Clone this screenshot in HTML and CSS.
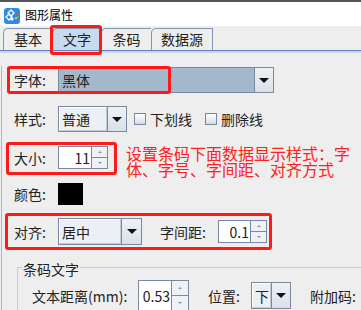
FILE: index.html
```html
<!DOCTYPE html>
<html lang="zh">
<head>
  <meta charset="utf-8">
  <title>图形属性</title>
  <link rel="stylesheet" href="styles.css">
</head>
<body>
  <div class="window">
    <div class="titlebar">
      <svg class="app-icon" width="16" height="16" viewBox="0 0 16 16">
        <rect x="0" y="0" width="16" height="16" rx="3" fill="#2f8ae6"/>
        <path d="M7 2 L10 5 L7 8 L4 5 Z" fill="none" stroke="#fff" stroke-width="1.3"/>
        <path d="M5 6 L8 9 L5 12 L2 9 Z" fill="none" stroke="#fff" stroke-width="1.3"/>
        <path d="M8 9 L10 11 L8 13 L6 11 Z" fill="#fff"/>
        <rect x="11" y="6" width="2" height="2" fill="#f04a3a"/>
        <rect x="11" y="9" width="2" height="2" fill="#f5c330"/>
        <rect x="13" y="8" width="2" height="2" fill="#3fc05a"/>
      </svg>
      <span class="title">图形属性</span>
    </div>

    <div class="tabs">
      <div class="tab tab-basic">基本</div>
      <div class="tab tab-text active">文字</div>
      <div class="tab tab-code">条码</div>
      <div class="tab tab-data">数据源</div>
    </div>
    <div class="tab-line"></div>

    <div class="panel">
      <div class="row row-font">
        <span class="label">字体:</span>
        <div class="combo combo-font">
          <span class="combo-field">黑体</span>
          <span class="combo-btn"><i class="arrow"></i></span>
        </div>
      </div>

      <div class="row row-style">
        <span class="label">样式:</span>
        <div class="combo combo-style">
          <span class="combo-field">普通</span>
          <span class="combo-btn"><i class="arrow"></i></span>
        </div>
        <span class="check check-under"><i class="box"></i>下划线</span>
        <span class="check check-strike"><i class="box"></i>删除线</span>
      </div>

      <div class="row row-size">
        <span class="label">大小:</span>
        <div class="spinner spin-size">
          <span class="spin-field">11</span>
          <span class="spin-btns"><i class="up"></i><i class="down"></i></span>
        </div>
        <div class="note">
          <span class="note-line">设置条码下面数据显示样式：字</span>
          <span class="note-line">体、字号、字间距、对齐方式</span>
        </div>
      </div>

      <div class="row row-color">
        <span class="label">颜色:</span>
        <span class="swatch"></span>
      </div>

      <div class="row row-align">
        <span class="label">对齐:</span>
        <div class="combo combo-align">
          <span class="combo-field">居中</span>
          <span class="combo-btn"><i class="arrow"></i></span>
        </div>
        <span class="label-spacing">字间距:</span>
        <div class="spinner spin-spacing">
          <span class="spin-field">0.1</span>
          <span class="spin-btns"><i class="up"></i><i class="down"></i></span>
        </div>
      </div>

      <fieldset class="group">
        <legend>条码文字</legend>
        <div class="row row-distance">
          <span class="label-distance">文本距离(mm):</span>
          <div class="spinner spin-distance">
            <span class="spin-field">0.53</span>
            <span class="spin-btns"><i class="up"></i><i class="down"></i></span>
          </div>
          <span class="label-pos">位置:</span>
          <div class="combo combo-pos">
            <span class="combo-field">下</span>
            <span class="combo-btn"><i class="arrow"></i></span>
          </div>
          <span class="label-extra">附加码:</span>
        </div>
      </fieldset>
    </div>

    <!-- red annotation frames -->
    <div class="mark mark-tab"></div>
    <div class="mark mark-font"></div>
    <div class="mark mark-size"></div>
    <div class="mark mark-align"></div>
  </div>
</body>
</html>
```

FILE: styles.css
```css
html, body {
  margin: 0;
  padding: 0;
}
body {
  background-color: #eeeeee;
  font-family: "Noto Sans CJK SC", "DejaVu Sans", sans-serif;
  font-size: 14px;
  color: #222;
}
.window {
  position: relative;
  width: 361px;
  height: 310px;
  overflow: hidden;
}

/* title bar */
.titlebar {
  height: 24px;
  border-top: 2px solid #555;
  background: #fff;
  display: flex;
  align-items: center;
}
.app-icon {
  margin-left: 4px;
  margin-top: 4px;
}
.title {
  margin-left: 5px;
  font-size: 12px;
  color: #000;
  line-height: 12px;
  margin-top: 2px;
}

/* tabs */
.tabs {
  display: flex;
  height: 22px;
  margin-top: 2px;
  padding-left: 3px;
}
.tab {
  box-sizing: border-box;
  height: 22px;
  border-left: 1px solid #8394ad;
  border-top: 1px solid #8394ad;
  border-top-left-radius: 5px;
  text-align: center;
  line-height: 20px;
  color: #222;
}
.tab-basic { width: 49px; }
.tab-text { width: 49px; }
.tab-code { width: 50px; }
.tab-data {
  width: 62px;
  border-right: 1px solid #8394ad;
}
.tab.active {
  background: #c8daef;
}
.tab-line {
  height: 2px;
  border-top: 1px solid #6482bd;
  background: #c6d7ee;
}

/* panel */
.panel {
  height: 260px;
  margin-left: 1px;
  border-left: 1px solid #a8b8d0;
  padding-left: 12px;
}
.row {
  display: flex;
  align-items: center;
}
.label {
  width: 44px;
  line-height: 16px;
}
.row-font { margin-top: 13px; height: 28px; }
.row-style { margin-top: 11px; height: 28px; }
.row-size { margin-top: 13px; height: 23px; }
.row-color { margin-top: 14px; height: 22px; }
.row-align { margin-top: 13px; height: 27px; }

/* combo boxes */
.combo {
  box-sizing: border-box;
  display: flex;
  border: 1px solid #7a8a9c;
  background: #eceff3;
}
.combo-field {
  flex: 1;
  box-sizing: border-box;
  border: 1px solid #fff;
  border-right-color: #c3ccd6;
  border-bottom-color: #c3ccd6;
  padding-left: 2px;
  display: flex;
  align-items: center;
  line-height: 16px;
}
.combo-btn {
  width: 19px;
  box-sizing: border-box;
  border-left: 1px solid #7a8a9c;
  background: linear-gradient(#eef2f6, #d8e0e9);
  display: flex;
  align-items: center;
  justify-content: center;
}
.arrow {
  width: 0;
  height: 0;
  border-left: 5px solid transparent;
  border-right: 5px solid transparent;
  border-top: 5px solid #111;
}
.combo-font {
  width: 216px;
  height: 26px;
}
.combo-font .combo-field {
  background: #a3b8cc;
  border-color: #a3b8cc;
}
.combo-style {
  width: 69px;
  height: 26px;
}
.combo-align {
  width: 84px;
  height: 27px;
}
.combo-align .combo-btn { width: 20px; }
.combo-pos {
  width: 40px;
  height: 27px;
}

/* checkboxes */
.check {
  display: flex;
  align-items: center;
  line-height: 16px;
}
.check .box {
  box-sizing: border-box;
  width: 12px;
  height: 12px;
  border: 1px solid #7a8a9c;
  background: linear-gradient(#ffffff, #d4dce6);
  margin-right: 4px;
}
.check-under { margin-left: 7px; }
.check-strike { margin-left: 13px; }

/* spinners */
.spinner {
  box-sizing: border-box;
  display: flex;
  border: 1px solid #7a8a9c;
  background: #fff;
}
.spin-field {
  flex: 1;
  text-align: right;
  padding-right: 1px;
  display: flex;
  align-items: center;
  justify-content: flex-end;
  line-height: 16px;
}
.spin-btns {
  width: 16px;
  box-sizing: border-box;
  border-left: 1px solid #7a8a9c;
  display: flex;
  flex-direction: column;
  background: #eef1f5;
}
.spin-btns i {
  flex: 1;
  display: flex;
  align-items: center;
  justify-content: center;
}
.spin-btns .up {
  border-bottom: 1px solid #7a8a9c;
}
.spin-btns .up::after {
  content: "";
  border-left: 2px solid transparent;
  border-right: 2px solid transparent;
  border-bottom: 2px solid #8a96a4;
}
.spin-btns .down::after {
  content: "";
  border-left: 2px solid transparent;
  border-right: 2px solid transparent;
  border-top: 2px solid #8a96a4;
}
.spin-size {
  width: 50px;
  height: 23px;
}
.spin-spacing {
  width: 49px;
  height: 23px;
}
.spin-distance {
  width: 51px;
  height: 31px;
}
.spin-distance .spin-btns {
  width: 17px;
}

.note {
  align-self: flex-start;
  margin-top: -1px;
  margin-left: 18px;
  font-size: 16px;
  color: #ff2020;
  white-space: nowrap;
}
.note-line {
  display: block;
  height: 16px;
  line-height: 16px;
}

.swatch {
  width: 25px;
  height: 22px;
  background: #000;
}

.label-spacing {
  margin-left: 18px;
  width: 58px;
  line-height: 16px;
}

/* group box */
.group {
  margin: 13px 0 0 3px;
  padding: 0;
  border: 1px solid #c4cedb;
  width: 400px;
  height: 80px;
  box-sizing: border-box;
}
.group legend {
  margin-left: 4px;
  padding: 4px 1px 0 1px;
  line-height: 14px;
  color: #222;
}
.row-distance {
  margin-top: 4px;
  padding-left: 14px;
  height: 31px;
}
.label-distance {
  width: 106px;
  line-height: 16px;
}
.label-pos {
  margin-left: 19px;
  width: 43px;
  line-height: 16px;
}
.label-extra {
  margin-left: 19px;
  line-height: 16px;
  white-space: nowrap;
}

/* red annotation frames drawn over the dialog */
.mark {
  position: absolute;
  box-sizing: border-box;
  border: 3px solid #ff1a1a;
  border-radius: 3px;
}
.mark-tab { left: 50px; top: 25px; width: 52px; height: 30px; }
.mark-font { left: 7px; top: 66px; width: 164px; height: 28px; }
.mark-size { left: 6px; top: 142px; width: 111px; height: 33px; }
.mark-align { left: 5px; top: 213px; width: 267px; height: 37px; }
```
